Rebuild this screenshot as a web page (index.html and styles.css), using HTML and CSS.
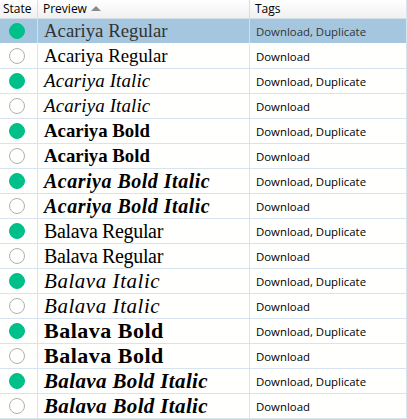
FILE: index.html
```html
<!DOCTYPE html>
<html>
<head>
<meta charset="utf-8">
<link rel="stylesheet" href="styles.css">
</head>
<body>
<div class="grid">
  <div class="hdr c-state">State</div>
  <div class="hdr c-prev">Preview <span class="sort"></span></div>
  <div class="hdr c-tags">Tags</div>

  <div class="row sel"><div class="c-state"><span class="dot on"></span></div><div class="c-prev ar">Acariya Regular</div><div class="c-tags">Download, Duplicate</div></div>
  <div class="row"><div class="c-state"><span class="dot"></span></div><div class="c-prev ar">Acariya Regular</div><div class="c-tags">Download</div></div>
  <div class="row"><div class="c-state"><span class="dot on"></span></div><div class="c-prev ai">Acariya Italic</div><div class="c-tags">Download, Duplicate</div></div>
  <div class="row"><div class="c-state"><span class="dot"></span></div><div class="c-prev ai">Acariya Italic</div><div class="c-tags">Download</div></div>
  <div class="row"><div class="c-state"><span class="dot on"></span></div><div class="c-prev ab">Acariya Bold</div><div class="c-tags">Download, Duplicate</div></div>
  <div class="row"><div class="c-state"><span class="dot"></span></div><div class="c-prev ab">Acariya Bold</div><div class="c-tags">Download</div></div>
  <div class="row"><div class="c-state"><span class="dot on"></span></div><div class="c-prev abi">Acariya Bold Italic</div><div class="c-tags">Download, Duplicate</div></div>
  <div class="row"><div class="c-state"><span class="dot"></span></div><div class="c-prev abi">Acariya Bold Italic</div><div class="c-tags">Download</div></div>
  <div class="row"><div class="c-state"><span class="dot on"></span></div><div class="c-prev br">Balava Regular</div><div class="c-tags">Download, Duplicate</div></div>
  <div class="row"><div class="c-state"><span class="dot"></span></div><div class="c-prev br">Balava Regular</div><div class="c-tags">Download</div></div>
  <div class="row"><div class="c-state"><span class="dot on"></span></div><div class="c-prev bi">Balava Italic</div><div class="c-tags">Download, Duplicate</div></div>
  <div class="row"><div class="c-state"><span class="dot"></span></div><div class="c-prev bi">Balava Italic</div><div class="c-tags">Download</div></div>
  <div class="row"><div class="c-state"><span class="dot on"></span></div><div class="c-prev bb">Balava Bold</div><div class="c-tags">Download, Duplicate</div></div>
  <div class="row"><div class="c-state"><span class="dot"></span></div><div class="c-prev bb">Balava Bold</div><div class="c-tags">Download</div></div>
  <div class="row"><div class="c-state"><span class="dot on"></span></div><div class="c-prev bbi">Balava Bold Italic</div><div class="c-tags">Download, Duplicate</div></div>
  <div class="row"><div class="c-state"><span class="dot"></span></div><div class="c-prev bbi">Balava Bold Italic</div><div class="c-tags">Download</div></div>
</div>
</body>
</html>
```

FILE: styles.css
```css
html, body {
  margin: 0;
  padding: 0;
  background: #fffffd;
}
body {
  width: 407px;
  height: 419px;
  overflow: hidden;
}
.grid {
  display: grid;
  grid-template-columns: 38px 212px 156px;
  width: 406px;
  border-right: 1px solid #d7e3ee;
}
.hdr {
  height: 18px;
  border-bottom: 1px solid #d5dfe8;
  background: linear-gradient(#ffffff, #f0f0f0);
  font-family: "Open Sans", "Noto Sans", sans-serif;
  font-size: 12px;
  line-height: 18px;
  color: #000;
  padding-left: 5px;
  display: flex;
  align-items: center;
  gap: 4px;
}
.hdr.c-state { padding-left: 3px; border-right: 1px solid #d5dfe8; }
.hdr.c-prev { border-right: 1px solid #d5dfe8; }
.sort {
  width: 0;
  height: 0;
  border-left: 5px solid transparent;
  border-right: 5px solid transparent;
  border-bottom: 5px solid #8a8a8a;
  margin-top: -1px;
}
.row {
  display: contents;
}
.row > div {
  height: 24px;
  border-bottom: 1px solid #d7e3ee;
  display: flex;
  align-items: center;
}
.row > .c-state {
  border-right: 1px solid #d7e3ee;
  justify-content: center;
  padding-right: 4px;
}
.row > .c-prev {
  border-right: 1px solid #d7e3ee;
  padding-left: 6px;
  font-family: "Liberation Serif", serif;
  white-space: nowrap;
  color: #000;
}
.row > .c-tags {
  padding-left: 6px;
  font-family: "Open Sans", "Noto Sans", sans-serif;
  font-size: 11.4px;
  color: #000;
}
.row.sel > div {
  background: #a4c7df;
  border-bottom-color: #ffffff;
  color: #333;
}
.row.sel > .c-state, .row.sel > .c-prev {
  border-right-color: #cfe0ee;
}
.ar { font-size: 18.8px; }
.ai { font-size: 19px; font-style: italic; letter-spacing: 0.1px; }
.ab { font-size: 18.8px; font-weight: bold; }
.abi { font-size: 20px; font-weight: bold; font-style: italic; letter-spacing: 0.5px; }
.br { font-size: 20px; letter-spacing: -0.35px; }
.bi { font-size: 21px; font-style: italic; letter-spacing: 0.55px; }
.bb { font-size: 22px; font-weight: bold; letter-spacing: 0.5px; }
.bbi { font-size: 21px; font-weight: bold; font-style: italic; letter-spacing: 0.36px; }
.dot {
  width: 14px;
  height: 14px;
  border-radius: 50%;
  border: 1px solid #b0b0b0;
  background: #fff;
}
.dot.on {
  background: #00c08a;
  border-color: #00c08a;
}
```
